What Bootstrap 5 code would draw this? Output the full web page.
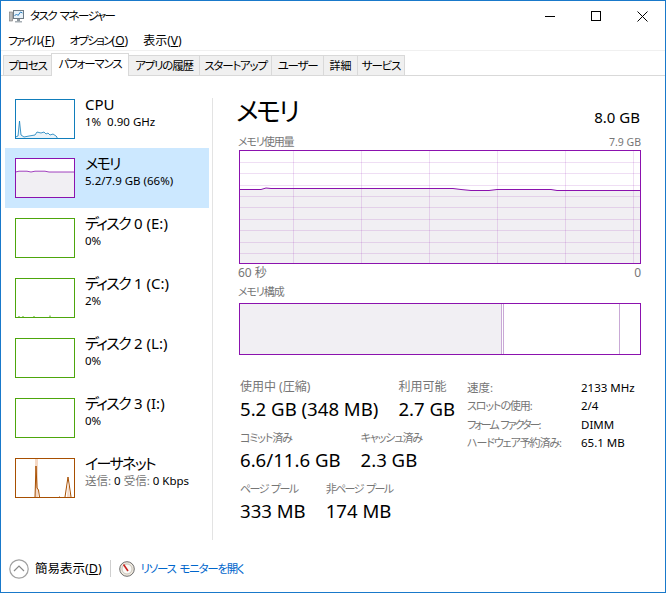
<!DOCTYPE html>
<html lang="ja">
<head>
<meta charset="utf-8">
<title>タスク マネージャー</title>
<link rel="stylesheet" href="https://cdn.jsdelivr.net/npm/bootstrap@5.3.0/dist/css/bootstrap.min.css">
<style>
html,body{margin:0;height:100%;background:#fff}
body{font-family:"Noto Sans","Noto Sans CJK JP",sans-serif;font-size:12px;color:#000;line-height:16px;font-feature-settings:"palt"}
.tm-win{width:666px;height:593px;border:1px solid #1979ca;overflow:hidden;background:#fff}
.tm-title{height:30px;padding-left:8px}
.tm-title-text{font-size:11.5px;margin-left:6px;letter-spacing:-1.5px;word-spacing:2px}
.tm-ctl{width:46px;height:30px}
.tm-menu{height:19px;padding-left:7px;border-bottom:1px solid #f0f0f0;box-sizing:content-box;gap:15px}
.tm-tabs{height:25px;padding-left:2px;border-bottom:1px solid #d9d9d9;align-items:flex-end;flex-wrap:nowrap}
.tm-tabs .nav-link{height:20px;padding:0;margin:0 0 0 0;border:1px solid #d9d9d9;border-bottom:0;border-radius:0;margin-left:-1px;background:#f0f0f0;color:#000;font-size:11.5px;line-height:19px;text-align:center;white-space:nowrap;letter-spacing:-1.2px}
.tm-tabs .nav-link.tm-kanji{letter-spacing:0;font-size:11px}
.tm-tabs .nav-link.active{height:23px;margin-bottom:-1px;background:#fff;border-color:#d9d9d9;color:#000;position:relative;z-index:1;line-height:20px}
.tm-side{width:208px;padding:13px 0 0 4px}
.tm-item{height:60px;width:204px;padding:10px 0 0 10px;gap:10px;border:0;border-radius:0;background:transparent;color:#000}
.tm-item.list-group-item.active{background:#cce8ff;color:#000}
.tm-name{font-size:15px;line-height:18px;margin-top:-4px}
.tm-sub{font-size:11.5px;line-height:16px;margin-top:1px}
.tm-rule{width:1px;height:442px;background:#e3e3e3;margin:22px 0 0 3px}
.tm-pane{width:428px;padding:18px 0 0 25px}
.tm-h{font-size:26px;line-height:34px;letter-spacing:-2.4px;margin-left:-2px}
.tm-total{font-size:15px;line-height:20px;margin-top:13px;padding-right:1px}
.tm-gray{color:#767676}
.tm-k1{font-size:11px;letter-spacing:-1.1px}
.tm-k2{font-size:11px;letter-spacing:-1.6px;word-spacing:2px}
.tm-k3{font-size:11px;letter-spacing:-2px;word-spacing:2px}
.tm-k4{font-size:15px;letter-spacing:-1.6px}
.tm-mk{font-size:11.5px;letter-spacing:-1.7px}
.tm-max{font-size:10.5px}
.tm-chart-label{line-height:16px}
.tm-chart{display:block;width:402px;margin-left:1px}
.tm-gap1{margin-top:6px}
.tm-gap3{margin-top:3px}
.tm-axis{line-height:14px;margin-top:2px}
.tm-lbl2{margin-top:4px}
.tm-stats{margin-top:24px;margin-left:2px}
.tm-left{width:227px}
.tm-group{gap:20px;margin-bottom:9px}
.tm-val{font-size:18.6px;line-height:24px;margin-top:2px;white-space:nowrap}
.tm-spec{display:grid;grid-template-columns:114px auto;grid-auto-rows:18.4px;line-height:18px;font-size:11.5px;white-space:nowrap}
.tm-foot{height:43px;padding:0 0 4px 8px}
.tm-simple{font-size:12.5px;margin-left:6px}
.tm-sep{width:1px;height:17px;background:#cfcfcf;margin:0 8px}
.tm-link{color:#0066cc;font-size:11.5px;letter-spacing:-1.25px;word-spacing:2px;text-decoration:none;margin-left:6px}
</style>
</head>
<body>
<div class="tm-win d-flex flex-column">
  <div class="tm-title d-flex align-items-center">
    <svg width="15" height="15" viewBox="0 0 15 15"><rect x="0.5" y="3" width="3" height="9" fill="#b9b9b9" stroke="#777" stroke-width=".6"/><rect x="4.5" y="1.5" width="10" height="8" fill="#e8f2fa" stroke="#6d7b86"/><path d="M5.5 7L7.5 5L9 6.5L11.5 3L13.5 4" fill="none" stroke="#2c7fc0"/><rect x="8" y="10" width="3" height="2" fill="#8a949c"/><rect x="6" y="12" width="7" height="1.5" fill="#a7afb5"/></svg>
    <span class="tm-title-text">タスク マネージャー</span>
    <div class="ms-auto d-flex">
      <div class="tm-ctl d-flex align-items-center justify-content-center"><svg width="11" height="11" viewBox="0 0 11 11"><path d="M0 5.5H10" stroke="#000"/></svg></div>
      <div class="tm-ctl d-flex align-items-center justify-content-center"><svg width="11" height="11" viewBox="0 0 11 11"><rect x="0.5" y="0.5" width="9" height="9" fill="none" stroke="#000"/></svg></div>
      <div class="tm-ctl d-flex align-items-center justify-content-center"><svg width="11" height="11" viewBox="0 0 11 11"><path d="M0.5 0.5L10.5 10.5M10.5 0.5L0.5 10.5" stroke="#000"/></svg></div>
    </div>
  </div>
  <div class="tm-menu d-flex align-items-center">
    <span><span class="tm-mk">ファイル</span>(<u>F</u>)</span><span><span class="tm-mk">オプション</span>(<u>O</u>)</span><span>表示(<u>V</u>)</span>
  </div>
  <ul class="nav tm-tabs d-flex">
    <li class="nav-item" style="width:48px;margin-left:1px"><a class="nav-link" href="#">プロセス</a></li>
    <li class="nav-item" style="width:77px"><a class="nav-link active" href="#">パフォーマンス</a></li>
    <li class="nav-item" style="width:71px"><a class="nav-link" href="#">アプリの履歴</a></li>
    <li class="nav-item" style="width:72px"><a class="nav-link" href="#">スタートアップ</a></li>
    <li class="nav-item" style="width:52px"><a class="nav-link" href="#">ユーザー</a></li>
    <li class="nav-item" style="width:34px"><a class="nav-link tm-kanji" href="#">詳細</a></li>
    <li class="nav-item" style="width:47px"><a class="nav-link" href="#">サービス</a></li>
  </ul>
  <div class="d-flex flex-grow-1">
    <div class="tm-side">
      <div class="list-group">
        <div class="list-group-item tm-item d-flex">
          <svg width="60" height="40" viewBox="0 0 60 40"><path d="M0.5 38L3 37L4.5 22L6 36L9 38L14 37L20 36L22 33L26 34L29 33L31 35L33 34L35 36L38 35L41 37L42 38V39.5H0.5Z" fill="#eaf4fa" stroke="#117dbb" stroke-width=".8"/><rect x="0.5" y="0.5" width="59" height="39" fill="none" stroke="#117dbb"/></svg>
          <div><div class="tm-name">CPU</div><div class="tm-sub">1%&nbsp; 0.90 GHz</div></div>
        </div>
        <div class="list-group-item tm-item active d-flex">
          <svg width="60" height="40" viewBox="0 0 60 40"><rect x="0.5" y="0.5" width="59" height="39" fill="#fff"/><path d="M0.5 14L4 13.2L12 13.2L16 14L20 13.2L30 13.2L34 14H59.5V39.5H0.5Z" fill="#f1eff3" stroke="#8b12ae" stroke-width=".8"/><rect x="0.5" y="0.5" width="59" height="39" fill="none" stroke="#8b12ae"/></svg>
          <div><div class="tm-name"><span class="tm-k4">メモリ</span></div><div class="tm-sub">5.2/7.9 GB (66%)</div></div>
        </div>
        <div class="list-group-item tm-item d-flex">
          <svg width="60" height="40" viewBox="0 0 60 40"><rect x="0.5" y="0.5" width="59" height="39" fill="none" stroke="#4da60c"/></svg>
          <div><div class="tm-name"><span class="tm-k4">ディスク</span> 0 (E:)</div><div class="tm-sub">0%</div></div>
        </div>
        <div class="list-group-item tm-item d-flex">
          <svg width="60" height="40" viewBox="0 0 60 40"><path d="M4 39V38M8 39V38M19 39V38M35 39V37.5" stroke="#4da60c"/><rect x="0.5" y="0.5" width="59" height="39" fill="none" stroke="#4da60c"/></svg>
          <div><div class="tm-name"><span class="tm-k4">ディスク</span> 1 (C:)</div><div class="tm-sub">2%</div></div>
        </div>
        <div class="list-group-item tm-item d-flex">
          <svg width="60" height="40" viewBox="0 0 60 40"><rect x="0.5" y="0.5" width="59" height="39" fill="none" stroke="#4da60c"/></svg>
          <div><div class="tm-name"><span class="tm-k4">ディスク</span> 2 (L:)</div><div class="tm-sub">0%</div></div>
        </div>
        <div class="list-group-item tm-item d-flex">
          <svg width="60" height="40" viewBox="0 0 60 40"><rect x="0.5" y="0.5" width="59" height="39" fill="none" stroke="#4da60c"/></svg>
          <div><div class="tm-name"><span class="tm-k4">ディスク</span> 3 (I:)</div><div class="tm-sub">0%</div></div>
        </div>
        <div class="list-group-item tm-item d-flex">
          <svg width="60" height="40" viewBox="0 0 60 40"><path d="M20 1H23V39H20Z" fill="#f5d9c6"/><path d="M20 39L21 8L22 30L23.5 32L24.5 39M50 39L53 19L55 32L56 39M44 39H45" fill="none" stroke="#a74f01"/><path d="M52 39L53 24L55 39Z" fill="#f5d9c6"/><rect x="0.5" y="0.5" width="59" height="39" fill="none" stroke="#a74f01"/></svg>
          <div><div class="tm-name"><span class="tm-k4">イーサネット</span></div><div class="tm-sub"><span class="tm-gray">送信:</span> 0 <span class="tm-gray">受信:</span> 0 Kbps</div></div>
        </div>
      </div>
    </div>
    <div class="tm-rule"></div>
    <div class="tm-pane">
      <div class="d-flex justify-content-between">
        <div class="tm-h">メモリ</div>
        <div class="tm-total">8.0 GB</div>
      </div>
      <div class="d-flex justify-content-between tm-gray tm-chart-label tm-gap1"><span class="tm-k1">メモリ使用量</span><span class="tm-max">7.9 GB</span></div>
      <svg class="tm-chart" width="402" height="114" viewBox="0 0 402 114">
        <path d="M0.5 39.5L22 39.5L27 38L32 38.5L36 38.5L214 38.5L222 39.5L232 40.5L250 40.5L258 39.5L312 39.5L318 40.5H401.5V113.5H0.5Z" fill="#f1eff3"/>
        <path d="M54.5 1V113M122.5 1V113M190.5 1V113M258.5 1V113M326.5 1V113M394.5 1V113M1 12.5H401M1 23.5H401M1 35.5H401M1 46.5H401M1 57.5H401M1 69.5H401M1 80.5H401M1 92.5H401M1 103.5H401" stroke="#8b12ae" stroke-opacity=".14" fill="none"/>
        <path d="M0.5 39.5L22 39.5L27 38L32 38.5L36 38.5L214 38.5L222 39.5L232 40.5L250 40.5L258 39.5L312 39.5L318 40.5H401.5" fill="none" stroke="#8b12ae"/>
        <rect x="0.5" y="0.5" width="401" height="113" fill="none" stroke="#8b12ae"/>
      </svg>
      <div class="d-flex justify-content-between tm-gray tm-axis"><span>60 秒</span><span>0</span></div>
      <div class="tm-gray tm-chart-label tm-lbl2"><span class="tm-k1">メモリ構成</span></div>
      <svg class="tm-chart tm-gap3" width="402" height="52" viewBox="0 0 402 52">
        <rect x="0.5" y="0.5" width="262" height="51" fill="#f1eff3"/>
        <path d="M262.5 1V51M264.5 1V51M380.5 1V51" stroke="#c9a9d6"/>
        <rect x="0.5" y="0.5" width="401" height="51" fill="none" stroke="#8b12ae"/>
      </svg>
      <div class="d-flex tm-stats">
        <div class="tm-left">
          <div class="d-flex tm-group">
            <div><div class="tm-gray">使用中 (圧縮)</div><div class="tm-val">5.2 GB (348 MB)</div></div>
            <div><div class="tm-gray">利用可能</div><div class="tm-val">2.7 GB</div></div>
          </div>
          <div class="d-flex tm-group">
            <div><div class="tm-gray"><span class="tm-k1">コミット済み</span></div><div class="tm-val">6.6/11.6 GB</div></div>
            <div><div class="tm-gray"><span class="tm-k1">キャッシュ済み</span></div><div class="tm-val">2.3 GB</div></div>
          </div>
          <div class="d-flex tm-group">
            <div><div class="tm-gray"><span class="tm-k2">ページ プール</span></div><div class="tm-val">333 MB</div></div>
            <div><div class="tm-gray"><span class="tm-k2">非ページ プール</span></div><div class="tm-val">174 MB</div></div>
          </div>
        </div>
        <div class="tm-spec">
          <span class="tm-gray">速度:</span><span>2133 MHz</span>
          <span class="tm-gray tm-k1">スロットの使用:</span><span>2/4</span>
          <span class="tm-gray tm-k3">フォーム ファクター:</span><span>DIMM</span>
          <span class="tm-gray tm-k1">ハードウェア予約済み:</span><span>65.1 MB</span>
        </div>
      </div>
    </div>
  </div>
  <div class="tm-foot d-flex align-items-center">
    <svg width="20" height="20" viewBox="0 0 20 20"><circle cx="10" cy="10" r="9.2" fill="#fff" stroke="#a0a0a0" stroke-width="1.2"/><path d="M5 12L10 7L15 12" fill="none" stroke="#8a8a8a" stroke-width="1.2"/></svg>
    <span class="tm-simple">簡易表示(<u>D</u>)</span>
    <span class="tm-sep"></span>
    <svg width="16" height="16" viewBox="0 0 16 16"><circle cx="8" cy="8" r="7.3" fill="#efe9df" stroke="#6e6e6e"/><circle cx="8" cy="8" r="5" fill="#fbfaf7" stroke="#b5b0a6" stroke-width=".7"/><path d="M4.5 3.5L9 10" stroke="#c8201c" stroke-width="1.6"/></svg>
    <a class="tm-link" href="#">リソース モニターを開く</a>
  </div>
</div>
</body>
</html>
